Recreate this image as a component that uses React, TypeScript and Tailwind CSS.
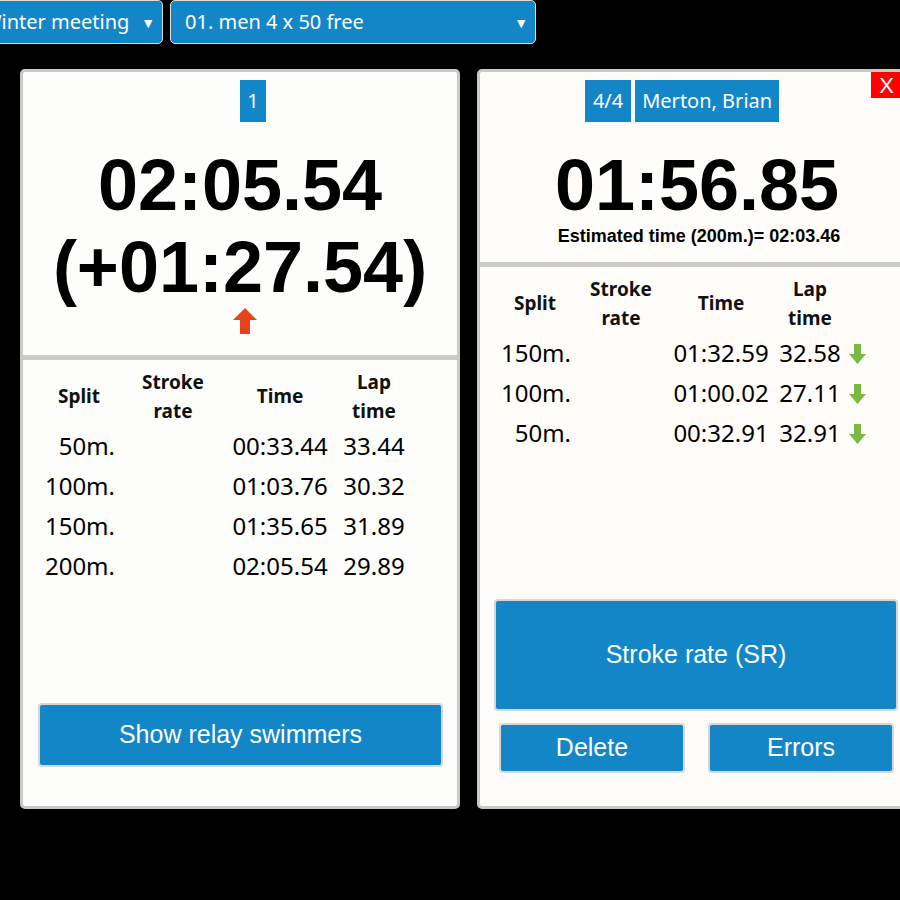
import React from "react";

const leftRows = [
  ["50m.", "", "00:33.44", "33.44"],
  ["100m.", "", "01:03.76", "30.32"],
  ["150m.", "", "01:35.65", "31.89"],
  ["200m.", "", "02:05.54", "29.89"],
];

const rightRows = [
  ["150m.", "", "01:32.59", "32.58"],
  ["100m.", "", "01:00.02", "27.11"],
  ["50m.", "", "00:32.91", "32.91"],
];

function UpArrow() {
  return (
    <svg width="24" height="26" viewBox="0 0 24 26">
      <polygon points="12,0 24,12 17,12 17,26 7,26 7,12 0,12" fill="#e6421c" />
    </svg>
  );
}

function DownArrow() {
  return (
    <svg width="17" height="20" viewBox="0 0 17 20">
      <polygon points="5,0 12,0 12,10 17,10 8.5,20 0,10 5,10" fill="#78b843" />
    </svg>
  );
}

function Select({ label, width }: { label: string; width: string }) {
  return (
    <div
      className={`flex items-center justify-between h-[44px] ${width} bg-[#1386c8] border border-[#dcdcdc] rounded-[5px] pl-[14px] pr-[7px] text-white text-[20px] font-['Noto_Sans',sans-serif] whitespace-nowrap overflow-hidden`}
    >
      <span>{label}</span>
      <span className="text-[14px]">▼</span>
    </div>
  );
}

function Header() {
  return (
    <>
      <div className="flex items-center justify-center h-[59px]">Split</div>
      <div className="flex items-center justify-center h-[59px] text-center leading-[29px]">
        Stroke
        <br />
        rate
      </div>
      <div className="flex items-center justify-center h-[59px]">Time</div>
      <div className="flex items-center justify-center h-[59px] text-center leading-[29px]">
        Lap
        <br />
        time
      </div>
    </>
  );
}

export default function App() {
  return (
    <div className="w-[900px] h-[900px] bg-black overflow-hidden">
      <div className="flex gap-[7px] -ml-[32px]">
        <Select label="Winter meeting" width="w-[195px]" />
        <Select label="01. men 4 x 50 free" width="w-[366px]" />
      </div>

      <div className="flex gap-[17px] pl-[20px] mt-[25px]">
        {/* left card */}
        <div className="flex flex-col shrink-0 w-[440px] h-[740px] bg-[#fdfdfc] border-[3px] border-[#c9c9c6] rounded-[5px]">
          <div className="flex flex-col items-center pt-[8px] pb-[21px]">
            <div className="pl-[26px]">
              <div className="flex items-center h-[42px] px-[7px] bg-[#1386c8] text-white text-[20px] font-['Noto_Sans',sans-serif]">
                1
              </div>
            </div>
            <div className="mt-[22px] text-center text-[72px] leading-[82px] font-bold text-black font-['Liberation_Sans',Arial,sans-serif]">
              <div>02:05.54</div>
              <div>(+01:27.54)</div>
            </div>
            <div className="pl-[10px]">
              <UpArrow />
            </div>
          </div>
          <div className="h-[5px] bg-[#ccccc8]" />
          <div className="flex flex-col flex-1 pt-[7px] font-['Noto_Sans',sans-serif] text-[#111]">
            <div className="grid grid-cols-[78px_110px_104px_84px] ml-[17px]">
              <div className="contents font-bold text-[19px]">
                <Header />
              </div>
              {leftRows.map((r) => (
                <div key={r[0]} className="contents text-[24px] text-black">
                  <div className="h-[40px] flex items-center justify-end pr-[3px]">{r[0]}</div>
                  <div className="h-[40px]">{r[1]}</div>
                  <div className="h-[40px] flex items-center justify-center">{r[2]}</div>
                  <div className="h-[40px] flex items-center justify-center">{r[3]}</div>
                </div>
              ))}
            </div>
            <button className="mt-auto mb-[39px] ml-[15px] mr-[14px] h-[64px] bg-[#1386c8] border-2 border-[#d6d6d6] rounded-[4px] text-white text-[25px] font-['Liberation_Sans',Arial,sans-serif]">
              Show relay swimmers
            </button>
          </div>
        </div>

        {/* right card */}
        <div className="relative flex flex-col shrink-0 w-[440px] h-[740px] bg-[#fffcfa] border-[3px] border-[#c9c9c6] rounded-[5px]">
          <div className="absolute top-0 right-[12px] flex items-center justify-center w-[31px] h-[26px] bg-[#ff0000] text-white text-[22px] font-['Liberation_Sans',Arial,sans-serif]">
            X
          </div>
          <div className="flex flex-col items-center pt-[8px] pb-[16px]">
            <div className="flex gap-[4px] pr-[30px] text-white text-[20px] font-['Noto_Sans',sans-serif]">
              <div className="flex items-center h-[42px] px-[8px] bg-[#1386c8]">4/4</div>
              <div className="flex items-center h-[42px] px-[7px] bg-[#1386c8]">Merton, Brian</div>
            </div>
            <div className="mt-[22px] text-[72px] leading-[82px] font-bold text-black font-['Liberation_Sans',Arial,sans-serif]">
              01:56.85
            </div>
            <div className="pl-[4px] text-[18px] leading-[20px] font-bold text-black font-['Liberation_Sans',Arial,sans-serif]">
              Estimated time (200m.)= 02:03.46
            </div>
          </div>
          <div className="h-[5px] bg-[#ccccc8]" />
          <div className="flex flex-col flex-1 pt-[7px] font-['Noto_Sans',sans-serif] text-[#111]">
            <div className="grid grid-cols-[78px_94px_106px_72px] ml-[16px]">
              <div className="contents font-bold text-[19px]">
                <Header />
              </div>
              {rightRows.map((r) => (
                <div key={r[0]} className="contents text-[24px] text-black">
                  <div className="h-[40px] flex items-center justify-end pr-[3px]">{r[0]}</div>
                  <div className="h-[40px]">{r[1]}</div>
                  <div className="h-[40px] flex items-center justify-center">{r[2]}</div>
                  <div className="h-[40px] flex items-center justify-center">
                    <span className="relative">
                      {r[3]}
                      <span className="absolute left-full top-[9px] ml-[8px]">
                        <DownArrow />
                      </span>
                    </span>
                  </div>
                </div>
              ))}
            </div>
            <div className="mt-auto mb-[33px] flex flex-col gap-[12px] font-['Liberation_Sans',Arial,sans-serif] text-white text-[25px]">
              <button className="h-[112px] ml-[14px] mr-[16px] bg-[#1386c8] border-2 border-[#d6d6d6] rounded-[4px]">
                Stroke rate (SR)
              </button>
              <div className="flex gap-[23px] ml-[19px]">
                <button className="w-[186px] h-[50px] bg-[#1386c8] border-2 border-[#d6d6d6] rounded-[4px]">
                  Delete
                </button>
                <button className="w-[186px] h-[50px] bg-[#1386c8] border-2 border-[#d6d6d6] rounded-[4px]">
                  Errors
                </button>
              </div>
            </div>
          </div>
        </div>
      </div>
    </div>
  );
}
